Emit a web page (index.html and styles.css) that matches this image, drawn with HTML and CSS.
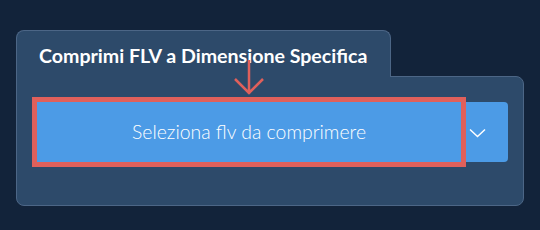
FILE: index.html
```html
<!DOCTYPE html>
<html lang="it">
<head>
    <meta charset="UTF-8">
    <title>Comprimi FLV</title>
    <link rel="stylesheet" href="styles.css">
</head>
<body>
    <div class="card">
        <div class="tab">
            <h2>Comprimi FLV a Dimensione Specifica</h2>
        </div>
        <div class="panel">
            <div class="btn-group">
                <button class="btn-main">Seleziona flv da comprimere</button>
                <button class="btn-drop">
                    <svg width="17" height="10" viewBox="0 0 17 10"><path d="M1 1.5 L8.5 8.5 L16 1.5" fill="none" stroke="#fff" stroke-width="1.5"/></svg>
                </button>
            </div>
        </div>
        <!-- freccia indicatore -->
        <svg class="pointer" width="32" height="38" viewBox="0 0 32 38">
            <path d="M16 0 V34 M2 19 L16 33 L30 19" fill="none" stroke="#e0605b" stroke-width="2.5"/>
        </svg>
    </div>
</body>
</html>
```

FILE: styles.css
```css
body {
    margin: 0;
    background: #12233a;
    font-family: Lato, "Open Sans", sans-serif;
}

.card {
    position: relative;
    width: 508px;
    margin: 30px 0 0 16px;
}

.tab {
    position: relative;
    z-index: 1;
    box-sizing: border-box;
    width: 375px;
    height: 47px;
    margin-bottom: -1px;
    padding: 0 0 0 22px;
    display: flex;
    align-items: center;
    background: #2d4a6a;
    border: 1px solid #4c6686;
    border-bottom: none;
    border-radius: 8px 8px 0 0;
}

.tab h2 {
    margin: 2px 0 0;
    font-size: 19.6px;
    font-weight: 700;
    color: #fff;
}

.panel {
    box-sizing: border-box;
    height: 130px;
    padding: 25px 0 0 20px;
    background: #2d4a6a;
    border: 1px solid #4c6686;
    border-radius: 0 8px 8px 8px;
}

.btn-group {
    display: flex;
    width: 471px;
    height: 60px;
}

button {
    border: none;
    background: #4c9be6;
    color: #fff;
    font-family: inherit;
    cursor: pointer;
}

.btn-main {
    position: relative;
    z-index: 1;
    width: 424px;
    padding: 0 0 1px;
    font-size: 19.4px;
    font-weight: 300;
    border-radius: 0;
    outline: 5px solid #e0605b;
}

.btn-drop {
    flex: 1;
    padding: 2px 0 0 8px;
    display: flex;
    align-items: center;
    border-radius: 0 4px 4px 0;
}

.pointer {
    position: absolute;
    z-index: 2;
    left: 217px;
    top: 30px;
}
```
